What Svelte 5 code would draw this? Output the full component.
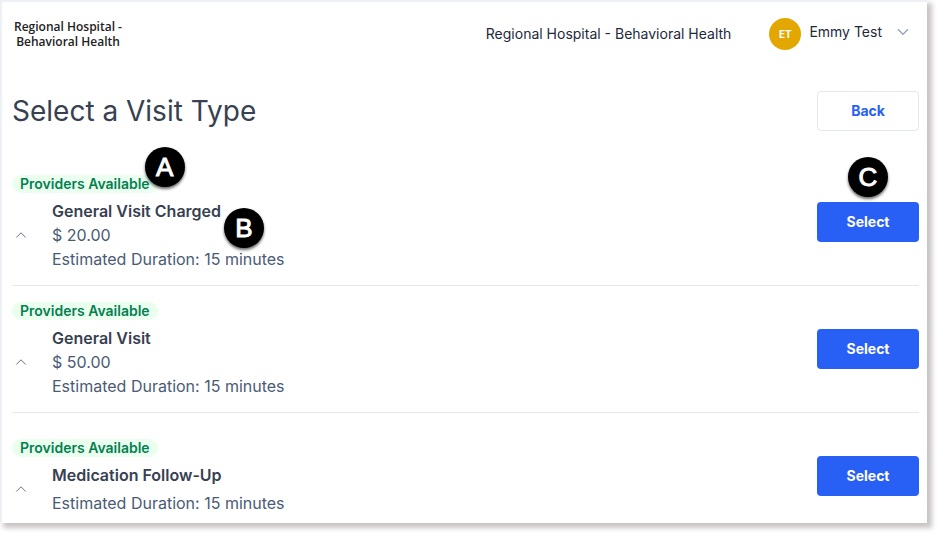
<script lang="ts">
  type Visit = {
    name: string;
    price?: string;
    minutes: number;
    annotated?: boolean;
  };

  const clinic = 'Regional Hospital - Behavioral Health';

  const visits: Visit[] = [
    { name: 'General Visit Charged', price: '$ 20.00', minutes: 15, annotated: true },
    { name: 'General Visit', price: '$ 50.00', minutes: 15 },
    { name: 'Medication Follow-Up', minutes: 15 },
  ];
</script>

<div class="panel">
  <header>
    <div class="logo">
      <div>Regional Hospital -</div>
      <div>Behavioral Health</div>
    </div>
    <div class="clinic">{clinic}</div>
    <button class="user" type="button">
      <span class="avatar">ET</span>
      <span class="user-name">Emmy Test</span>
      <svg class="caret" viewBox="0 0 12 8" aria-hidden="true">
        <path d="M1 1.2 L6 6.3 L11 1.2" />
      </svg>
    </button>
  </header>

  <main>
    <div class="title-row">
      <h1>Select a Visit Type</h1>
      <button class="btn back" type="button">Back</button>
    </div>

    <ul>
      {#each visits as visit}
        <li class:no-price={!visit.price}>
          <div class="info">
            <div class="status">
              <span class="badge">Providers Available</span>
              {#if visit.annotated}<span class="marker marker-a">A</span>{/if}
            </div>
            <div class="details">
              <button class="toggle" type="button" aria-label="Toggle {visit.name}">
                <svg viewBox="0 0 12 8" aria-hidden="true">
                  <path d="M1.3 6.5 L6 1.8 L10.7 6.5" />
                </svg>
              </button>
              <div class="lines">
                <div class="name">
                  <strong>{visit.name}</strong>
                  {#if visit.annotated}<span class="marker marker-b">B</span>{/if}
                </div>
                {#if visit.price}<div>{visit.price}</div>{/if}
                <div>Estimated Duration: {visit.minutes} minutes</div>
              </div>
            </div>
          </div>
          <div class="action">
            <button class="btn select" type="button">Select</button>
            {#if visit.annotated}<span class="marker marker-c">C</span>{/if}
          </div>
        </li>
      {/each}
    </ul>
  </main>
</div>

<style>
  :global(body) {
    background: #fff;
    font-family: Inter, "Liberation Sans", sans-serif;
    display: flow-root;
  }
  button {
    font-family: inherit;
    cursor: pointer;
  }
  .panel {
    margin: 0 12px 12px 0;
    border-top: 2px solid #edf1f6;
    border-left: 2px solid #edf1f6;
    background: #fff;
    box-shadow: 4px 4px 5px 1px #c8c4c4;
  }
  header {
    display: flex;
    align-items: center;
    height: 64px;
    padding: 0 18px 0 12px;
    color: #1e293b;
    font-size: 14px;
  }
  .logo {
    font-family: "Open Sans", "Noto Sans", sans-serif;
    font-size: 12px;
    font-weight: 600;
    line-height: 15px;
    text-align: center;
    color: #222;
  }
  .clinic {
    margin-left: auto;
    padding-bottom: 2px;
  }
  .user {
    display: flex;
    align-items: center;
    margin-left: 38px;
    padding: 0;
    border: 0;
    background: none;
    color: inherit;
    font-size: 14px;
  }
  .avatar {
    width: 32px;
    height: 32px;
    border-radius: 50%;
    background: #e3a702;
    color: #fff;
    font-size: 10px;
    font-weight: 700;
    line-height: 32px;
    text-align: center;
  }
  .user-name {
    margin-left: 8px;
    padding-bottom: 5px;
  }
  .caret {
    width: 12px;
    height: 8px;
    margin-left: 15px;
    padding-bottom: 4px;
    fill: none;
    stroke: #94a3b8;
    stroke-width: 1.3;
  }
  main { padding: 25px 8px 0 10px; }
  .title-row {
    display: flex;
    justify-content: space-between;
    align-items: center;
    margin-bottom: 28px;
  }
  h1 {
    margin: 0;
    font-size: 28px;
    font-weight: 400;
    line-height: 40px;
    color: #374151;
  }
  .btn {
    box-sizing: border-box;
    width: 102px;
    height: 40px;
    padding: 0 0 2px;
    border-radius: 4px;
    font-size: 14px;
    font-weight: 700;
  }
  .back {
    border: 1px solid #e5e7ef;
    background: #fff;
    color: #2860f6;
  }
  .select {
    display: block;
    border: 0;
    background: #2860f6;
    color: #fff;
  }
  ul {
    margin: 0;
    padding: 0;
    list-style: none;
  }
  li {
    display: flex;
    justify-content: space-between;
    align-items: center;
    padding: 14px 0;
    border-bottom: 1px solid #e5e7eb;
  }
  li:last-child {
    padding: 24px 0 8px;
    border-bottom: 0;
  }
  .status {
    position: relative;
    width: max-content;
    padding: 2px 0 6px;
  }
  .badge {
    display: block;
    padding: 0 8px;
    border-radius: 9px;
    background: #ebffee;
    color: #048052;
    font-size: 14px;
    font-weight: 600;
    line-height: 18px;
  }
  .details {
    display: flex;
    align-items: center;
  }
  .toggle {
    display: flex;
    width: 40px;
    padding: 0 3px;
    border: 0;
    background: none;
  }
  .toggle svg {
    width: 12px;
    height: 8px;
    fill: none;
    stroke: #64748b;
    stroke-width: 1;
  }
  .lines {
    color: #4a5b75;
    font-size: 16px;
    line-height: 24px;
  }
  .no-price .lines {
    display: grid;
    gap: 4px;
  }
  .name {
    position: relative;
    width: max-content;
    color: #374151;
  }
  .name strong { font-weight: 600; }
  .action { position: relative; }
  .marker {
    position: absolute;
    width: 40px;
    height: 40px;
    border-radius: 50%;
    background: #000;
    box-shadow: 0 2px 3px rgba(0, 0, 0, 0.6);
    color: #fff;
    font-family: "Liberation Sans", Arial, sans-serif;
    font-size: 26px;
    line-height: 40px;
    text-align: center;
    -webkit-text-stroke: 1px #fff;
  }
  .marker-a {
    right: -27px;
    top: -26px;
  }
  .marker-b {
    left: 172px;
    top: 9px;
  }
  .marker-c {
    left: 31px;
    top: -45px;
  }
</style>
